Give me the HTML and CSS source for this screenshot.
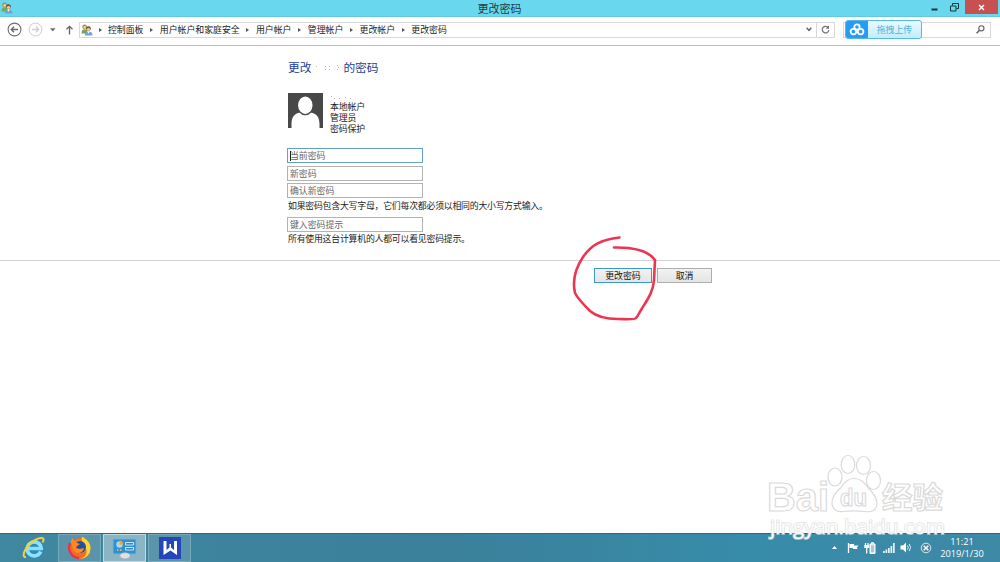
FILE: index.html
```html
<!DOCTYPE html>
<html lang="zh-CN">
<head>
<meta charset="utf-8">
<title>更改密码</title>
<link rel="stylesheet" href="styles.css">
</head>
<body>
<svg class="defs" width="0" height="0">
  <symbol id="users" viewBox="0 0 12 12">
    <circle cx="3.6" cy="2.9" r="2.3" fill="#b9854a"/><circle cx="3.8" cy="3.4" r="1.4" fill="#f1cf9d"/>
    <path d="M.5 9.5Q.5 5.3 3.6 5.3 6.5 5.3 6.5 9.5Z" fill="#79a84f"/>
    <circle cx="7.4" cy="4.6" r="2.4" fill="#6b4a2d"/><circle cx="7.5" cy="5.3" r="1.6" fill="#f0c594"/>
    <path d="M3.8 11.5Q3.8 7.4 7.4 7.4 11.5 7.4 11.5 11.5Z" fill="#6ea3d6"/><path d="m6.3 7.6 1.2 2.2 1.2-2.2Z" fill="#fff"/>
  </symbol>
</svg>
<div class="screen">
  <header class="titlebar">
    <svg class="app-icon" width="12" height="12"><use href="#users"/></svg>
    <h1 class="title">更改密码</h1>
    <div class="controls">
      <svg class="minimize" width="7" height="10" viewBox="0 0 7 10"><path d="M.5 7.500h6" stroke="#16333a" stroke-width="2"/></svg>
      <svg width="9" height="9" viewBox="0 0 9 9"><path d="M2.500 2.500v-2h6v5h-2" fill="none" stroke="#16333a"/><path d="M.5 3h5.500v5h-5.500z" fill="none" stroke="#16333a"/></svg>
      <span class="close"><svg width="7" height="7" viewBox="0 0 7 7"><path d="m1 1 5 5M6 1 1 6" stroke="#fff" stroke-width="1.400"/></svg></span>
    </div>
  </header>
  <nav class="nav">
    <svg class="circle-nav" width="15" height="15" viewBox="0 0 15 15" fill="none" stroke="#6c6c6c"><circle cx="7.500" cy="7.500" r="6.400" stroke-width="1.100"/><path d="M11 7.500H4.500M7 4.800 4.300 7.500 7 10.200" stroke-width="1.500"/></svg>
    <svg class="circle-nav forward" width="15" height="15" viewBox="0 0 15 15" fill="none" stroke="#cfcfcf"><circle cx="7.500" cy="7.500" r="6.400"/><path d="M4 7.500h6.500M8 4.800l2.700 2.700L8 10.200" stroke-width="1.400"/></svg>
    <svg class="history" width="6" height="4" viewBox="0 0 6 4"><path d="M0 .3h5.600L2.800 3.500Z" fill="#707070"/></svg>
    <svg class="up" width="9" height="10" viewBox="0 0 9 10"><path d="M4.500 9.500V1.200M1.500 4.300l3-3 3 3" fill="none" stroke="#666" stroke-width="1.300"/></svg>
    <div class="address">
      <svg width="12" height="12"><use href="#users"/></svg>
      <ol class="crumbs"><li>控制面板</li><li>用户帐户和家庭安全</li><li>用户帐户</li><li>管理帐户</li><li>更改帐户</li><li>更改密码</li></ol>
      <span class="chevron"><svg width="6" height="5" viewBox="0 0 6 5"><path d="m.7.8 2.300 2.700L5.300.8" fill="none" stroke="#606060" stroke-width="1.400"/></svg></span>
      <span class="refresh"><svg width="9" height="9" viewBox="0 0 9 9"><path d="M7.200 2.700A3.300 3.300 0 1 0 7.800 5" fill="none" stroke="#707070" stroke-width="1.200"/><path d="M8 .3v3.400H4.700Z" fill="#707070"/></svg></span>
    </div>
    <div class="search">
      <div class="upload">
        <span class="cloud"><svg width="16" height="13" viewBox="0 0 16 13" fill="none" stroke="#fff" stroke-width="1.800"><circle cx="8" cy="4" r="2.700"/><circle cx="4.400" cy="8.600" r="2.800"/><circle cx="11.600" cy="8.600" r="2.800"/></svg></span>
        <span class="upload-text">拖拽上传</span>
      </div>
      <svg class="lens" width="9" height="9" viewBox="0 0 9 9" fill="none" stroke="#606060"><circle cx="5.400" cy="3.300" r="2.600" stroke-width="1.100"/><path d="M3.500 5.200.6 8.200" stroke-width="1.500"/></svg>
    </div>
  </nav>
  <main class="content">
    <section class="form">
      <h2 class="heading"><span>更改</span><svg width="32" height="12" viewBox="0 0 32 12" fill="#b5bdd2"><path d="M5 5h1v1H5zM14 5h1v1h-1zM14 8h1v1h-1zM18 5h1v1h-1zM18 8h1v1h-1zM26 4h1v1h-1zM27 6h1v1h-1zM26 8h1v1h-1z"/></svg><span>的密码</span></h2>
      <div class="account">
        <svg class="avatar" width="35" height="35" viewBox="0 0 35 35"><path fill="#484848" d="M0 0h35v35H0z"/><path d="M3.500 35V31C3.500 24 6.500 20.500 12 19.500q5.300 4.500 10.600 0C28.500 20.500 31.500 24 31.500 31V35Z" fill="#fff"/><ellipse cx="17.300" cy="12.500" rx="8.200" ry="9.800" fill="#484848"/><ellipse cx="17.300" cy="12.200" rx="7.200" ry="8.700" fill="#fff"/></svg>
        <div class="details"><svg width="24" height="9" viewBox="0 0 24 9" fill="#b5b5b5"><path d="M1 4h1v1H1zM4 6h1v1H4zM9 6h1v1H9zM15 5h1v1h-1zM20 6h1v1h-1z"/></svg><span>本地帐户</span><span>管理员</span><span>密码保护</span></div>
      </div>
      <div class="field focus"><i class="caret"></i>当前密码</div>
      <div class="field">新密码</div>
      <div class="field">确认新密码</div>
      <p class="note">如果密码包含大写字母，它们每次都必须以相同的大小写方式输入。</p>
      <div class="field">键入密码提示</div>
      <p class="note">所有使用这台计算机的人都可以看见密码提示。</p>
    </section>
    <div class="actions"><button class="button primary">更改密码</button><button class="button">取消</button></div>
  </main>
  <footer class="taskbar">
    <div class="apps">
      <span class="app plain"><svg width="24" height="24" viewBox="0 0 24 24"><path d="M18.700 15.500A7 7 0 1 1 19.200 12.500H7" fill="none" stroke="#2789c9" stroke-width="5"/><path d="M18.700 15.500A7 7 0 1 1 19.200 12.500H7" fill="none" stroke="#8be2fa" stroke-width="3.600"/><path d="M4 21C-2 22 4 8 14 3.500 20 .5 23.500 2 20.500 6.500" fill="none" stroke="#f6cf3b" stroke-width="2"/></svg></span>
      <span class="app"><svg width="24" height="24" viewBox="0 0 24 24"><circle cx="12" cy="12.500" r="10.500" fill="#f36b26"/><path d="M14 .8c4 2 9 6 8.500 12A10.500 10.500 0 0 1 12 23c7-2 8-8 5-12-2-3-4-4-3-10.200Z" fill="#ffd437"/><path d="M3 6 4 2l3 3 5-1 2 5-5 2 1 2 5-1c0 5-7 6-9 1Z" fill="#ff8b23"/><circle cx="12" cy="11" r="6" fill="#26509b"/><path d="M3 5c3 0 5 0 6 2l3 1-3 2-1 2 4 1 4-1c-1 6-9 7-11 1Z" fill="#ff8a22"/><path d="M2 7c-3 7 2 15 9 15" fill="none" stroke="#e6354b" stroke-width="2.300"/></svg></span>
      <span class="app active"><svg width="25" height="22" viewBox="0 0 25 22"><rect x="1" y="2" width="23" height="15" rx="1" fill="#3390ca" stroke="#6ab6df"/><circle cx="7.500" cy="7.500" r="3.200" fill="#a7d9f2"/><path d="M7.500 7.500V3.600a3.900 3.900 0 0 1 3.600 4Z" fill="#f4a13d"/><path d="M5 13h1.500M8 13h1.500" stroke="#f6c45d" stroke-width="1.500"/><path d="M13.500 5.500h8v2.500h-8zM13.500 10.500h8V13h-8z" fill="#3989b7" stroke="#c2e8f7"/><ellipse cx="13" cy="18.700" rx="5" ry="3" fill="#dfe1e2" stroke="#a9b5ba" stroke-width=".5"/></svg></span>
      <span class="app"><svg width="22" height="22" viewBox="0 0 22 22"><path fill="#2546b9" d="M0 0h22v22H0z"/><path d="M4.500 4h3v9l3-2.500V7h1.500v3.500l3 2.500V4h3v14l-6.500-4.500L4.500 18Z" fill="#fff"/></svg></span>
    </div>
    <div class="tray">
      <svg width="5" height="3" viewBox="0 0 5 3"><path d="M2.500 0 5 3H0Z" fill="#fff"/></svg>
      <svg class="flag" width="12" height="12" viewBox="0 0 12 12"><path d="M1.500 1v10" stroke="#fff" stroke-width="1.300"/><path d="M2.500 2H7v1.500h4.500L10 5.500l.5 1.500H6V6H2.500Z" fill="#fff"/></svg>
      <svg class="battery" width="12" height="12" viewBox="0 0 12 12"><path d="M6 2h1.500V.7h2V2H11v9.500H6Z" fill="#dbe8ec" stroke="#fff"/><path d="M7 3.500h3v6.500H7z" fill="#a8c7d3"/><path d="M1.500 1v3M4 1v3M2.700 5v6.500" stroke="#fff" stroke-width="1.300"/><path d="M.3 3h5v3h-5z" fill="#fff"/></svg>
      <svg class="signal" width="12" height="10" viewBox="0 0 12 10"><path d="M0 8h1.700v2H0zM2.500 6.500h1.700V10H2.500zM5 5h1.700v5H5zM7.500 3h1.700v7H7.500zM10 0h1.700v10H10z" fill="#e9f3f5"/></svg>
      <svg class="speaker" width="12" height="11" viewBox="0 0 12 11"><path d="M.5 3.500H3L6 .5v10l-3-3H.5Z" fill="#fff"/><path d="M7.500 3.500q1.500 2 0 4M9.200 2q2.800 3.500 0 7" fill="none" stroke="#e2eff2"/></svg>
      <svg class="status" width="12" height="12" viewBox="0 0 12 12"><circle cx="6" cy="6" r="4.800" fill="#52879d" stroke="#d1e7ef"/><path d="m3.700 3.700 4.600 4.600M8.300 3.700 3.700 8.300" stroke="#fff" stroke-width="1.400"/></svg>
      <div class="clock"><span>11:21</span><span>2019/1/30</span></div>
    </div>
  </footer>
  <svg class="annotation" width="90" height="90" viewBox="0 0 90 90"><path d="M48.500 2.500C30 5 21 9 12 22 4 34 1 45 4 58c3 6 9 12 15 18 7 6 16 8 28 8 7 0 17 1 18-1 2-2 3-5 5-8 6-10 12-17 13-30l1-20c-5-7-17-13-41-12.500" fill="none" stroke="#ee3450" stroke-width="2.600" stroke-linecap="round" stroke-linejoin="round"/></svg>
  <svg class="watermark" width="190" height="92" viewBox="0 0 190 92">
    <g class="outline">
      <text x="1" y="60.500" class="brand" textLength="62" lengthAdjust="spacingAndGlyphs">Bai</text>
      <ellipse cx="69" cy="27" rx="7" ry="9"/><ellipse cx="82" cy="14.500" rx="6.800" ry="9"/><ellipse cx="97.500" cy="15.500" rx="7" ry="9"/><ellipse cx="107.500" cy="30.500" rx="7" ry="9"/>
      <path d="M88 28.500c-7 0-10 5-13 9-5 5-9 9-9 15 0 7 5 10 11 9 8-1 14-1 22 0 6 1 12-1 12-8 0-6-4-11-9-16-4-5-7-9-14-9Z"/>
      <text x="74" y="56" class="du" textLength="27" lengthAdjust="spacingAndGlyphs">du</text>
      <text x="116" y="58" class="cn" textLength="61" lengthAdjust="spacingAndGlyphs">经验</text>
    </g>
    <text x="4" y="84" class="url" textLength="175" lengthAdjust="spacingAndGlyphs">jingyan.baidu.com</text>
  </svg>
</div>
</body>
</html>
```

FILE: styles.css
```css
* { box-sizing: border-box; }
body { margin: 0; background: #fff; color: #222; font: 8.9px/11px "Noto Sans CJK SC", sans-serif; }
.defs { position: absolute; }
svg { display: block; flex: none; }
h1, h2, p, ol { margin: 0; padding: 0; font-weight: 400; }
.screen { position: relative; width: 1000px; height: 562px; display: flex; flex-direction: column; overflow: hidden; }
.titlebar { height: 17px; flex: none; background: #69d8ee; border-bottom: 1px solid #64c9de; display: grid; grid-template-columns: 1fr auto 1fr; align-items: start; padding: 0 2px 0 1px; }
.app-icon { margin-top: 2px; }
.title { font-size: 11px; line-height: 16px; color: #1d3d46; }
.controls { display: flex; justify-content: flex-end; align-items: center; height: 14px; gap: 11px; }
.controls > svg { margin-right: 1px; }
.close { width: 33px; height: 14px; margin: 0 0 0 -6px; background: #c75050; display: flex; align-items: center; justify-content: center; }
.nav { height: 29px; flex: none; border-bottom: 1px solid #bdbdbd; display: flex; align-items: center; padding: 0 9px 3px 7px; }
.forward { margin-left: 6px; }
.history { margin-left: 7px; }
.up { margin: 0 5px 0 9px; }
.address { width: 756px; height: 16px; border: 1px solid #d9d9d9; display: flex; align-items: center; padding-left: 1px; }
.crumbs { flex: 1; display: flex; list-style: none; white-space: nowrap; margin-left: -1px; }
.crumbs li { display: flex; align-items: center; color: #222; }
.crumbs li::before { content: ""; margin: 0 6.500px; border-left: 3px solid #555; border-top: 2.500px solid transparent; border-bottom: 2.500px solid transparent; }
.crumbs li + li::before { margin-right: 6.800px; }
.chevron { padding-right: 4px; }
.refresh { height: 14px; width: 18px; border-left: 1px solid #d9d9d9; display: flex; align-items: center; justify-content: center; }
.search { height: 16px; width: 148px; margin-left: 8px; border: 1px solid #d9d9d9; display: flex; align-items: center; justify-content: space-between; padding: 0 5px 0 1px; }
.upload { width: 77px; height: 19px; flex: none; border: 1px solid #55b8e8; border-radius: 3px; display: flex; background: linear-gradient(#e9faff, #c2edfc); overflow: hidden; }
.cloud { width: 22px; background: #279cf5; display: flex; align-items: center; justify-content: center; }
.upload-text { flex: 1; text-align: center; color: #4cb6dc; line-height: 17px; }
.content { flex: 1; padding-top: 12px; }
.form { margin-left: 287px; height: 202px; display: flex; flex-direction: column; }
.heading { height: 18px; display: flex; align-items: center; color: #1c3f94; font-size: 11.700px; line-height: 18px; padding-left: 1px; }
.account { height: 44px; display: flex; gap: 7px; margin: 16px 0 12px; padding-left: 1px; }
.details { display: flex; flex-direction: column; letter-spacing: -.1px; }
.avatar { margin-top: 1px; }
.field { width: 136px; height: 15px; flex: none; border: 1px solid #b3b3b3; padding: 0 2px; margin-bottom: 2.600px; line-height: 13px; color: #666; display: flex; }
.focus { border-color: #65a0cc; }
.caret { width: 1px; height: 10px; margin: 2px -1px 0 0; background: #222; }
.note { height: 11px; margin: -1px 0 6px 1px; line-height: 11px; white-space: nowrap; letter-spacing: -.22px; }
.actions { border-top: 1px solid #d2d2d2; padding: 7px 0 0 594px; display: flex; gap: 5px; }
.button { width: 55px; height: 15px; padding: 0; border: 1px solid #adadad; background: linear-gradient(#f2f2f2, #e5e5e5); font: 8.900px/12px "Noto Sans CJK SC", sans-serif; color: #111; }
.primary { width: 58px; border-color: #3c98ce; }
.taskbar { height: 29px; flex: none; background: linear-gradient(90deg, #4087a0, #3b809b 45%, #378ca9 75%, #3d89a6); border-top: 1px solid #286c84; display: flex; justify-content: space-between; }
.apps { display: flex; gap: 2px; padding-left: 13px; }
.app { width: 43px; height: 28px; border: 1px solid #76a9bc; background: #5a94aa; display: flex; align-items: center; justify-content: center; }
.plain { border: 0; background: none; padding-right: 2px; }
.active { background: #8cb5c4; border-color: #c0dae3; }
.tray { display: flex; align-items: center; color: #fff; padding: 0 15px 1px 0; }
.flag { margin-left: 10px; }
.battery { margin-left: 5px; }
.signal { margin-left: 7px; }
.speaker { margin-left: 5px; }
.status { margin-left: 8px; }
.clock { width: 46px; margin-left: 7px; display: flex; flex-direction: column; align-items: center; font: 9.200px/12px "Open Sans", sans-serif; }
.annotation { position: absolute; left: 571px; top: 235px; }
.watermark { position: absolute; left: 766px; top: 450px; }
.outline { fill: #fff; stroke: #dadada; stroke-width: 1.200; }
.brand { font: 700 40px "Liberation Sans", sans-serif; }
.du { font: 700 24px "Liberation Sans", sans-serif; }
.cn { font: 700 30px "Noto Sans CJK SC", sans-serif; }
.url { font: 20px "Open Sans", sans-serif; fill: #fff; fill-opacity: .9; stroke: #dcdcdc; stroke-opacity: .8; stroke-width: 1.600; paint-order: stroke; }
```
